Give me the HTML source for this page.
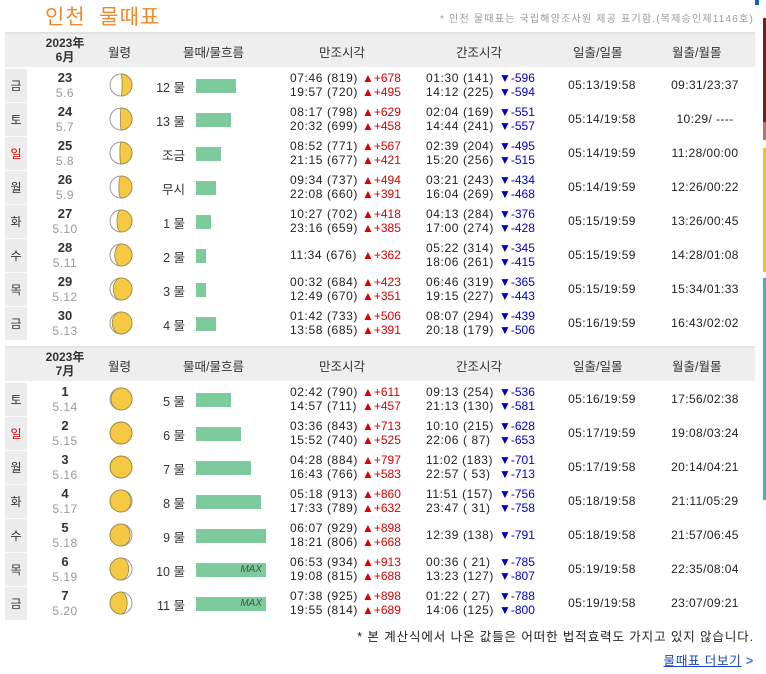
<!DOCTYPE html>
<html><head><meta charset="utf-8"><style>
*{margin:0;padding:0;box-sizing:border-box}
body{width:766px;height:674px;background:#fff;position:relative;overflow:hidden;font-family:"Liberation Sans","Noto Sans CJK KR",sans-serif;color:#222;font-size:12px}
.a{position:absolute;white-space:nowrap}
.title{left:45px;top:1px;font-size:21px;color:#f0892a;letter-spacing:1px}
.note{right:12px;top:10px;font-size:10px;color:#999;letter-spacing:1.2px}
.hd{position:absolute;left:5px;width:750px;height:35px;background:#eeeeee;border-top:2px solid #e2e2e2}
.hd div{position:absolute;top:8px;font-size:12.5px;color:#333;white-space:nowrap}
.hd .ym{top:2px;left:40px;width:40px;text-align:center;font-weight:bold;font-size:12px;line-height:14px;color:#333}
.r{position:absolute;left:5px;width:750px;height:34px}
.r>*{position:absolute;white-space:nowrap}
.dw{left:0;top:0;width:22px;height:34px;background:#ececec;text-align:center;line-height:34px;font-size:12px;color:#333;border-top:1px solid #fafafa}
.dw.s{color:#d00}
.dn{left:40px;width:40px;text-align:center;top:2px;font-weight:bold;font-size:13px;color:#333}
.lu{left:40px;width:40px;text-align:center;top:18px;color:#999;font-size:12px;letter-spacing:.5px}
.mo{left:104px;top:5px}
.tl{left:130px;width:50px;text-align:right;top:9px;font-size:12.5px;color:#333}
.bar{left:191px;top:11px;height:14px;background:#7dcb9c}
.mx{font-style:italic;font-size:10px;color:#3b5a45;position:absolute;right:4px;top:0;line-height:14px}
.t{font-size:12px;letter-spacing:.6px;line-height:14px}
.l1{top:3px}.l2{top:17px}.c{top:10px}
.h1{left:285px}.u1{left:357px;color:#d00;letter-spacing:0}
.h2{left:421px}.d2{left:494px;color:#0000c0;letter-spacing:0}
.sr{left:562px;width:70px;text-align:center;top:10px;letter-spacing:.4px}
.mr{left:660px;width:80px;text-align:center;top:10px;letter-spacing:.4px}
svg{display:block}
</style></head><body>
<div class="a title">인천 &nbsp;물때표</div>
<div class="a note">* 인천 물때표는 국립해양조사원 제공 표기함.(복제승인제1146호)</div>
<div class="a" style="left:763px;top:18px;width:3px;height:104px;background:#7a1c1c"></div>
<div class="a" style="left:763px;top:122px;width:3px;height:18px;background:#c07070"></div>
<div class="a" style="left:763px;top:148px;width:3px;height:124px;background:#f0c81e"></div>
<div class="a" style="left:763px;top:278px;width:3px;height:222px;background:#3ab0e0"></div>
<div class="a" style="left:755px;top:0;width:4px;height:5px;background:#1a5fc0"></div>

<div class="hd" style="top:32px"><div class="ym">2023年<br>6月</div><div style="left:103px">월령</div><div style="left:178px">물때/물흐름</div><div style="left:314px">만조시각</div><div style="left:451px">간조시각</div><div style="left:568px">일출/일몰</div><div style="left:667px">월출/월몰</div></div>

<div class="r" style="top:68px"><div class="dw">금</div><div class="dn">23</div><div class="lu">5.6</div><div class="mo"><svg width="24" height="24"><circle cx="12" cy="12" r="11" fill="#fff" stroke="#999"/><path d="M12 1A11 11 0 0 1 12 23A1.1 11 0 0 0 12 1Z" fill="#f6c944" stroke="#9a8440" stroke-width=".8"/></svg></div><div class="tl">12 물</div><div class="bar" style="width:40px"></div><div class="t l1 h1">07:46 (819)</div><div class="t l1 u1">▲+678</div><div class="t l2 h1">19:57 (720)</div><div class="t l2 u1">▲+495</div><div class="t l1 h2">01:30 (141)</div><div class="t l1 d2">▼-596</div><div class="t l2 h2">14:12 (225)</div><div class="t l2 d2">▼-594</div><div class="t sr">05:13/19:58</div><div class="t mr">09:31/23:37</div></div>

<div class="r" style="top:102px"><div class="dw">토</div><div class="dn">24</div><div class="lu">5.7</div><div class="mo"><svg width="24" height="24"><circle cx="12" cy="12" r="11" fill="#fff" stroke="#999"/><path d="M12 1A11 11 0 0 1 12 23A0.5 11 0 0 1 12 1Z" fill="#f6c944" stroke="#9a8440" stroke-width=".8"/></svg></div><div class="tl">13 물</div><div class="bar" style="width:35px"></div><div class="t l1 h1">08:17 (798)</div><div class="t l1 u1">▲+629</div><div class="t l2 h1">20:32 (699)</div><div class="t l2 u1">▲+458</div><div class="t l1 h2">02:04 (169)</div><div class="t l1 d2">▼-551</div><div class="t l2 h2">14:44 (241)</div><div class="t l2 d2">▼-557</div><div class="t sr">05:14/19:58</div><div class="t mr">10:29/ ----</div></div>

<div class="r" style="top:136px"><div class="dw s">일</div><div class="dn">25</div><div class="lu">5.8</div><div class="mo"><svg width="24" height="24"><circle cx="12" cy="12" r="11" fill="#fff" stroke="#999"/><path d="M12 1A11 11 0 0 1 12 23A1.1 11 0 0 1 12 1Z" fill="#f6c944" stroke="#9a8440" stroke-width=".8"/></svg></div><div class="tl">조금</div><div class="bar" style="width:25px"></div><div class="t l1 h1">08:52 (771)</div><div class="t l1 u1">▲+567</div><div class="t l2 h1">21:15 (677)</div><div class="t l2 u1">▲+421</div><div class="t l1 h2">02:39 (204)</div><div class="t l1 d2">▼-495</div><div class="t l2 h2">15:20 (256)</div><div class="t l2 d2">▼-515</div><div class="t sr">05:14/19:59</div><div class="t mr">11:28/00:00</div></div>

<div class="r" style="top:170px"><div class="dw">월</div><div class="dn">26</div><div class="lu">5.9</div><div class="mo"><svg width="24" height="24"><circle cx="12" cy="12" r="11" fill="#fff" stroke="#999"/><path d="M12 1A11 11 0 0 1 12 23A2.2 11 0 0 1 12 1Z" fill="#f6c944" stroke="#9a8440" stroke-width=".8"/></svg></div><div class="tl">무시</div><div class="bar" style="width:20px"></div><div class="t l1 h1">09:34 (737)</div><div class="t l1 u1">▲+494</div><div class="t l2 h1">22:08 (660)</div><div class="t l2 u1">▲+391</div><div class="t l1 h2">03:21 (243)</div><div class="t l1 d2">▼-434</div><div class="t l2 h2">16:04 (269)</div><div class="t l2 d2">▼-468</div><div class="t sr">05:14/19:59</div><div class="t mr">12:26/00:22</div></div>

<div class="r" style="top:204px"><div class="dw">화</div><div class="dn">27</div><div class="lu">5.10</div><div class="mo"><svg width="24" height="24"><circle cx="12" cy="12" r="11" fill="#fff" stroke="#999"/><path d="M12 1A11 11 0 0 1 12 23A4 11 0 0 1 12 1Z" fill="#f6c944" stroke="#9a8440" stroke-width=".8"/></svg></div><div class="tl">1 물</div><div class="bar" style="width:15px"></div><div class="t l1 h1">10:27 (702)</div><div class="t l1 u1">▲+418</div><div class="t l2 h1">23:16 (659)</div><div class="t l2 u1">▲+385</div><div class="t l1 h2">04:13 (284)</div><div class="t l1 d2">▼-376</div><div class="t l2 h2">17:00 (274)</div><div class="t l2 d2">▼-428</div><div class="t sr">05:15/19:59</div><div class="t mr">13:26/00:45</div></div>

<div class="r" style="top:238px"><div class="dw">수</div><div class="dn">28</div><div class="lu">5.11</div><div class="mo"><svg width="24" height="24"><circle cx="12" cy="12" r="11" fill="#fff" stroke="#999"/><path d="M12 1A11 11 0 0 1 12 23A6.2 11 0 0 1 12 1Z" fill="#f6c944" stroke="#9a8440" stroke-width=".8"/></svg></div><div class="tl">2 물</div><div class="bar" style="width:10px"></div><div class="t c h1">11:34 (676)</div><div class="t c u1">▲+362</div><div class="t l1 h2">05:22 (314)</div><div class="t l1 d2">▼-345</div><div class="t l2 h2">18:06 (261)</div><div class="t l2 d2">▼-415</div><div class="t sr">05:15/19:59</div><div class="t mr">14:28/01:08</div></div>

<div class="r" style="top:272px"><div class="dw">목</div><div class="dn">29</div><div class="lu">5.12</div><div class="mo"><svg width="24" height="24"><circle cx="12" cy="12" r="11" fill="#fff" stroke="#999"/><path d="M12 1A11 11 0 0 1 12 23A7.7 11 0 0 1 12 1Z" fill="#f6c944" stroke="#9a8440" stroke-width=".8"/></svg></div><div class="tl">3 물</div><div class="bar" style="width:10px"></div><div class="t l1 h1">00:32 (684)</div><div class="t l1 u1">▲+423</div><div class="t l2 h1">12:49 (670)</div><div class="t l2 u1">▲+351</div><div class="t l1 h2">06:46 (319)</div><div class="t l1 d2">▼-365</div><div class="t l2 h2">19:15 (227)</div><div class="t l2 d2">▼-443</div><div class="t sr">05:15/19:59</div><div class="t mr">15:34/01:33</div></div>

<div class="r" style="top:306px"><div class="dw">금</div><div class="dn">30</div><div class="lu">5.13</div><div class="mo"><svg width="24" height="24"><circle cx="12" cy="12" r="11" fill="#fff" stroke="#999"/><path d="M12 1A11 11 0 0 1 12 23A8.8 11 0 0 1 12 1Z" fill="#f6c944" stroke="#9a8440" stroke-width=".8"/></svg></div><div class="tl">4 물</div><div class="bar" style="width:20px"></div><div class="t l1 h1">01:42 (733)</div><div class="t l1 u1">▲+506</div><div class="t l2 h1">13:58 (685)</div><div class="t l2 u1">▲+391</div><div class="t l1 h2">08:07 (294)</div><div class="t l1 d2">▼-439</div><div class="t l2 h2">20:18 (179)</div><div class="t l2 d2">▼-506</div><div class="t sr">05:16/19:59</div><div class="t mr">16:43/02:02</div></div>

<div class="hd" style="top:346px"><div class="ym">2023年<br>7月</div><div style="left:103px">월령</div><div style="left:178px">물때/물흐름</div><div style="left:314px">만조시각</div><div style="left:451px">간조시각</div><div style="left:568px">일출/일몰</div><div style="left:667px">월출/월몰</div></div>

<div class="r" style="top:382px"><div class="dw">토</div><div class="dn">1</div><div class="lu">5.14</div><div class="mo"><svg width="24" height="24"><circle cx="12" cy="12" r="11" fill="#fff" stroke="#999"/><path d="M12 1A11 11 0 0 1 12 23A9.9 11 0 0 1 12 1Z" fill="#f6c944" stroke="#9a8440" stroke-width=".8"/></svg></div><div class="tl">5 물</div><div class="bar" style="width:35px"></div><div class="t l1 h1">02:42 (790)</div><div class="t l1 u1">▲+611</div><div class="t l2 h1">14:57 (711)</div><div class="t l2 u1">▲+457</div><div class="t l1 h2">09:13 (254)</div><div class="t l1 d2">▼-536</div><div class="t l2 h2">21:13 (130)</div><div class="t l2 d2">▼-581</div><div class="t sr">05:16/19:59</div><div class="t mr">17:56/02:38</div></div>

<div class="r" style="top:416px"><div class="dw s">일</div><div class="dn">2</div><div class="lu">5.15</div><div class="mo"><svg width="24" height="24"><circle cx="12" cy="12" r="11" fill="#f6c944" stroke="#9a8440"/></svg></div><div class="tl">6 물</div><div class="bar" style="width:45px"></div><div class="t l1 h1">03:36 (843)</div><div class="t l1 u1">▲+713</div><div class="t l2 h1">15:52 (740)</div><div class="t l2 u1">▲+525</div><div class="t l1 h2">10:10 (215)</div><div class="t l1 d2">▼-628</div><div class="t l2 h2">22:06 ( 87)</div><div class="t l2 d2">▼-653</div><div class="t sr">05:17/19:59</div><div class="t mr">19:08/03:24</div></div>

<div class="r" style="top:450px"><div class="dw">월</div><div class="dn">3</div><div class="lu">5.16</div><div class="mo"><svg width="24" height="24"><circle cx="12" cy="12" r="11" fill="#f6c944" stroke="#9a8440"/></svg></div><div class="tl">7 물</div><div class="bar" style="width:55px"></div><div class="t l1 h1">04:28 (884)</div><div class="t l1 u1">▲+797</div><div class="t l2 h1">16:43 (766)</div><div class="t l2 u1">▲+583</div><div class="t l1 h2">11:02 (183)</div><div class="t l1 d2">▼-701</div><div class="t l2 h2">22:57 ( 53)</div><div class="t l2 d2">▼-713</div><div class="t sr">05:17/19:58</div><div class="t mr">20:14/04:21</div></div>

<div class="r" style="top:484px"><div class="dw">화</div><div class="dn">4</div><div class="lu">5.17</div><div class="mo"><svg width="24" height="24"><circle cx="12" cy="12" r="11" fill="#fff" stroke="#999"/><path d="M12 1A11 11 0 0 0 12 23A10 11 0 0 0 12 1Z" fill="#f6c944" stroke="#9a8440" stroke-width=".8"/></svg></div><div class="tl">8 물</div><div class="bar" style="width:65px"></div><div class="t l1 h1">05:18 (913)</div><div class="t l1 u1">▲+860</div><div class="t l2 h1">17:33 (789)</div><div class="t l2 u1">▲+632</div><div class="t l1 h2">11:51 (157)</div><div class="t l1 d2">▼-756</div><div class="t l2 h2">23:47 ( 31)</div><div class="t l2 d2">▼-758</div><div class="t sr">05:18/19:58</div><div class="t mr">21:11/05:29</div></div>

<div class="r" style="top:518px"><div class="dw">수</div><div class="dn">5</div><div class="lu">5.18</div><div class="mo"><svg width="24" height="24"><circle cx="12" cy="12" r="11" fill="#fff" stroke="#999"/><path d="M12 1A11 11 0 0 0 12 23A9.2 11 0 0 0 12 1Z" fill="#f6c944" stroke="#9a8440" stroke-width=".8"/></svg></div><div class="tl">9 물</div><div class="bar" style="width:70px"></div><div class="t l1 h1">06:07 (929)</div><div class="t l1 u1">▲+898</div><div class="t l2 h1">18:21 (806)</div><div class="t l2 u1">▲+668</div><div class="t c h2">12:39 (138)</div><div class="t c d2">▼-791</div><div class="t sr">05:18/19:58</div><div class="t mr">21:57/06:45</div></div>

<div class="r" style="top:552px"><div class="dw">목</div><div class="dn">6</div><div class="lu">5.19</div><div class="mo"><svg width="24" height="24"><circle cx="12" cy="12" r="11" fill="#fff" stroke="#999"/><path d="M12 1A11 11 0 0 0 12 23A7.7 11 0 0 0 12 1Z" fill="#f6c944" stroke="#9a8440" stroke-width=".8"/></svg></div><div class="tl">10 물</div><div class="bar" style="width:70px"><span class="mx">MAX</span></div><div class="t l1 h1">06:53 (934)</div><div class="t l1 u1">▲+913</div><div class="t l2 h1">19:08 (815)</div><div class="t l2 u1">▲+688</div><div class="t l1 h2">00:36 ( 21)</div><div class="t l1 d2">▼-785</div><div class="t l2 h2">13:23 (127)</div><div class="t l2 d2">▼-807</div><div class="t sr">05:19/19:58</div><div class="t mr">22:35/08:04</div></div>

<div class="r" style="top:586px"><div class="dw">금</div><div class="dn">7</div><div class="lu">5.20</div><div class="mo"><svg width="24" height="24"><circle cx="12" cy="12" r="11" fill="#fff" stroke="#999"/><path d="M12 1A11 11 0 0 0 12 23A6.2 11 0 0 0 12 1Z" fill="#f6c944" stroke="#9a8440" stroke-width=".8"/></svg></div><div class="tl">11 물</div><div class="bar" style="width:70px"><span class="mx">MAX</span></div><div class="t l1 h1">07:38 (925)</div><div class="t l1 u1">▲+898</div><div class="t l2 h1">19:55 (814)</div><div class="t l2 u1">▲+689</div><div class="t l1 h2">01:22 ( 27)</div><div class="t l1 d2">▼-788</div><div class="t l2 h2">14:06 (125)</div><div class="t l2 d2">▼-800</div><div class="t sr">05:19/19:58</div><div class="t mr">23:07/09:21</div></div>

<div class="a" style="right:12px;top:626px;font-size:12.5px;color:#222;letter-spacing:.9px">* 본 계산식에서 나온 값들은 어떠한 법적효력도 가지고 있지 않습니다.</div>
<div class="a" style="right:12px;top:650px;font-size:12.5px;letter-spacing:.8px"><span style="color:#1a44c0;text-decoration:underline">물때표 더보기</span> <span style="color:#3a7ad8;font-weight:bold">&gt;</span></div>
</body></html>
